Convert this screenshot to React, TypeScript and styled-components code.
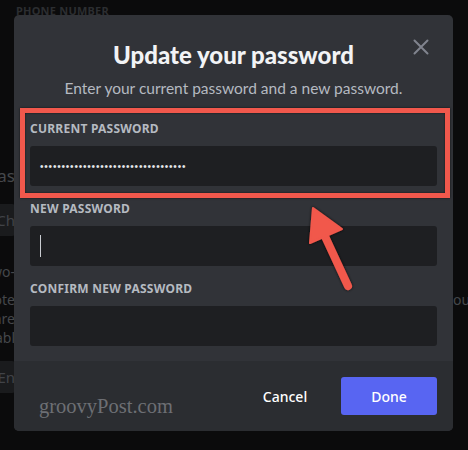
import React from "react";
import styled, { createGlobalStyle } from "styled-components";

const GlobalStyle = createGlobalStyle`
  html, body { margin: 0; padding: 0; background: #0b0b0c; }
  body { font-family: "Noto Sans", "Open Sans", sans-serif; }
  * { box-sizing: border-box; }
`;

const Page = styled.div`
  position: relative;
  width: 468px;
  height: 450px;
  overflow: hidden;
  background: #0b0b0c;
`;

/* ---------- dimmed settings page behind the modal ---------- */
const Backdrop = styled.div`
  display: flex;
  flex-direction: column;
  height: 100%;
`;

const TopLabel = styled.div`
  margin: 4px 0 0 16px;
  font-size: 11px;
  line-height: 14px;
  font-weight: 700;
  letter-spacing: 0.02em;
  color: #2c2e31;
  text-transform: uppercase;
`;

const Gutters = styled.div`
  display: flex;
  justify-content: space-between;
  flex: 1;
`;

const Gutter = styled.div<{ $side: "left" | "right" }>`
  width: 15px;
  overflow: hidden;
  display: flex;
  flex-direction: column;
  align-items: ${(p) => (p.$side === "left" ? "flex-end" : "flex-start")};
`;

const BgText = styled.div<{ $top: number; $size?: number }>`
  margin-top: ${(p) => p.$top}px;
  font-size: ${(p) => p.$size ?? 14}px;
  line-height: 19px;
  white-space: nowrap;
  color: #45474b;
`;

const BgButton = styled.div<{ $top: number }>`
  margin-top: ${(p) => p.$top}px;
  height: 32px;
  padding: 0 0 0 16px;
  display: flex;
  align-items: center;
  white-space: nowrap;
  font-size: 15px;
  color: #414348;
  background: #1a1b1d;
  border-radius: 3px;
`;

/* ---------- modal ---------- */
const Modal = styled.div`
  position: absolute;
  top: 15px;
  left: 14px;
  width: 439px;
  background: #313338;
  border-radius: 5px;
  overflow: hidden;
`;

const Header = styled.div`
  position: relative;
  padding: 25px 16px 0;
  text-align: center;
`;

const Title = styled.h1`
  margin: 0;
  font-family: "Lato", "Noto Sans", sans-serif;
  font-size: 24px;
  line-height: 30px;
  font-weight: 900;
  color: #f2f3f5;
`;

const Subtitle = styled.p`
  margin: 8px 0 0;
  font-family: "Lato", "Noto Sans", sans-serif;
  font-size: 15.5px;
  line-height: 20px;
  color: #b5bac1;
`;

const CloseButton = styled.button`
  position: absolute;
  top: 24px;
  right: 24px;
  width: 16px;
  height: 16px;
  padding: 0;
  border: 0;
  background: none;
  color: #80848e;
  display: flex;
`;

const Form = styled.div`
  display: flex;
  flex-direction: column;
  gap: 15px;
  padding: 23px 16px 15px;
`;

const Field = styled.div`
  position: relative;
  display: flex;
  flex-direction: column;
  gap: 9px;
`;

const Label = styled.label`
  font-size: 12px;
  line-height: 16px;
  font-weight: 700;
  letter-spacing: 0.02em;
  text-transform: uppercase;
  color: #b5bac1;
`;

const InputBox = styled.div`
  height: 40px;
  padding: 0 10px;
  display: flex;
  align-items: center;
  background: #1e1f22;
  border-radius: 3px;
`;

const Dots = styled.span`
  font-family: "Liberation Sans", Arial, sans-serif;
  font-size: 10px;
  letter-spacing: 0.8px;
  color: #e3e5e8;
`;

const Caret = styled.span`
  width: 1px;
  height: 22px;
  background: #c9ccd1;
`;

const Highlight = styled.div`
  position: absolute;
  top: -13px;
  left: -10px;
  right: -13px;
  bottom: -12px;
  border: 5px solid #f1584c;
  box-shadow: 0 0 2px rgba(0, 0, 0, 0.7), inset 0 0 2px rgba(0, 0, 0, 0.7);
  pointer-events: none;
`;

const Footer = styled.div`
  position: relative;
  display: flex;
  justify-content: flex-end;
  gap: 8px;
  padding: 16px;
  background: #2b2d31;
`;

const Button = styled.button<{ $primary?: boolean }>`
  height: 38px;
  min-width: 96px;
  padding: 2px 16px;
  border: 0;
  border-radius: 3px;
  font-family: "Noto Sans", sans-serif;
  font-size: 14px;
  font-weight: 500;
  color: #ffffff;
  background: ${(p) => (p.$primary ? "#5865f2" : "transparent")};
`;

const Watermark = styled.div`
  position: absolute;
  left: 25px;
  top: 33px;
  font-family: "Liberation Serif", "Times New Roman", serif;
  font-size: 20.5px;
  line-height: 24px;
  color: #6d6f74;
`;

const ArrowLayer = styled.svg`
  position: absolute;
  inset: 0;
  pointer-events: none;
`;

export default function App() {
  return (
    <>
      <GlobalStyle />
      <Page>
        <Backdrop>
          <TopLabel>Phone Number</TopLabel>
          <Gutters>
            <Gutter $side="left">
              <BgText $top={148} $size={17}>Pas</BgText>
              <BgButton $top={19}>Ch</BgButton>
              <BgText $top={26}>Two-</BgText>
              <BgText $top={9}>Prote</BgText>
              <BgText $top={0}>are</BgText>
              <BgText $top={0}>abl</BgText>
              <BgButton $top={14}>En</BgButton>
            </Gutter>
            <Gutter $side="right">
              <BgText $top={272}>ou</BgText>
            </Gutter>
          </Gutters>
        </Backdrop>

        <Modal>
          <Header>
            <Title>Update your password</Title>
            <Subtitle>Enter your current password and a new password.</Subtitle>
            <CloseButton aria-label="Close">
              <svg width="16" height="16" viewBox="0 0 16 16">
                <path d="M1.5 1.5 L14.5 14.5 M14.5 1.5 L1.5 14.5" stroke="currentColor" strokeWidth="2" strokeLinecap="round" />
              </svg>
            </CloseButton>
          </Header>

          <Form>
            <Field>
              <Label>Current Password</Label>
              <InputBox>
                <Dots>{"•".repeat(34)}</Dots>
              </InputBox>
              <Highlight />
            </Field>
            <Field>
              <Label>New Password</Label>
              <InputBox>
                <Caret />
              </InputBox>
            </Field>
            <Field>
              <Label>Confirm New Password</Label>
              <InputBox />
            </Field>
          </Form>

          <Footer>
            <Watermark>groovyPost.com</Watermark>
            <Button>Cancel</Button>
            <Button $primary>Done</Button>
          </Footer>
        </Modal>

        <ArrowLayer width="468" height="450" viewBox="0 0 468 450">
          <defs>
            <filter id="arrowShadow" x="-50%" y="-50%" width="200%" height="200%">
              <feDropShadow dx="0" dy="0" stdDeviation="1.6" floodColor="#000" floodOpacity="0.8" />
            </filter>
          </defs>
          <g filter="url(#arrowShadow)" fill="#f1584c" stroke="#f1584c">
            <line x1="323" y1="232" x2="348" y2="286" strokeWidth="8" strokeLinecap="round" />
            <polygon points="313,208 342,229 310,243" strokeWidth="2" strokeLinejoin="round" />
          </g>
        </ArrowLayer>
      </Page>
    </>
  );
}
